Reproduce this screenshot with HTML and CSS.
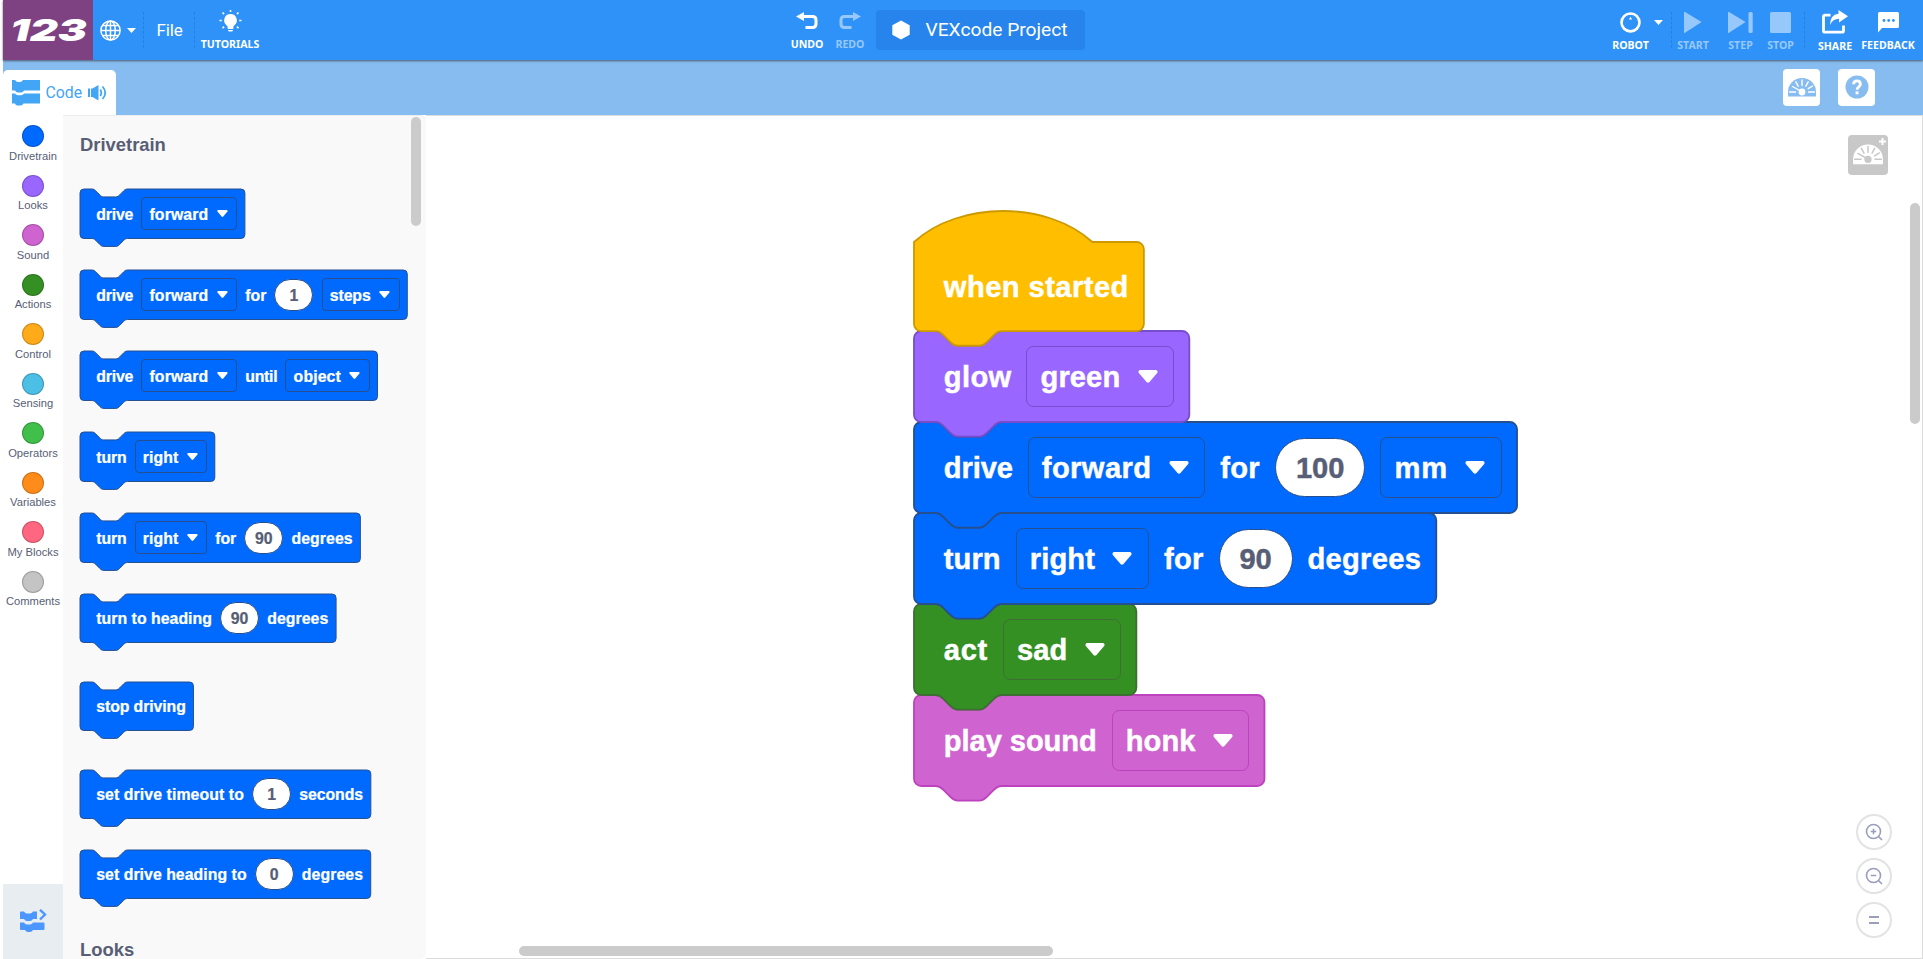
FILE: index.html
```html
<!DOCTYPE html>
<html lang="en">
<head>
<meta charset="utf-8">
<title>VEXcode 123</title>
<link rel="stylesheet" href="styles.css">
</head>
<body>
<svg class="defs" width="0" height="0">
  <symbol id="gauge" viewBox="0 0 30 20">
    <path class="g-body" d="M1 19.5V15a14 14 0 0 1 28 0v4.500z"/>
    <g class="g-mark"><path d="M2.500 15h6M21.500 15h6M15 3v5.500M8.800 4.800l2.400 4.400M21.200 4.800l-2.400 4.400M25.600 9l-4.400 2.700M5.500 9.500l8 4.500"/></g>
    <circle class="g-hub" cx="15" cy="15" r="3.400"/>
  </symbol>
</svg>
<header class="topbar">
  <div class="logo"><svg width="90" height="60"><text x="7" y="41.200" textLength="77" lengthAdjust="spacingAndGlyphs">123</text></svg></div>
  <div class="lang">
    <svg width="21" height="21" viewBox="0 0 21 21"><g fill="none" stroke="#fff" stroke-width="1.500"><circle cx="10.500" cy="10.500" r="9.600"/><ellipse cx="10.500" cy="10.500" rx="4.800" ry="9.600"/><path d="M10.500 1v19M1 10.500h19M2.500 5.600h16M2.500 15.400h16"/></g></svg>
    <svg class="lang-caret" width="9" height="5"><path d="M0 0h9L4.500 5z" fill="#fff"/></svg>
  </div>
  <i class="sep"></i>
  <div class="file">File</div>
  <i class="sep"></i>
  <div class="tool tutorials"><svg width="23" height="23" viewBox="0 0 23 23"><path fill="#fff" d="M11.500 4a6.300 6.300 0 0 0-4 11.200c.9.800 1.200 1.800 1.200 2.800v1h5.600v-1c0-1 .3-2 1.200-2.800A6.300 6.300 0 0 0 11.500 4zM8.800 20h5.400l-1 1.500h-3.400z"/><path stroke="#fff" stroke-width="1.600" d="M11.500 0v2M3.500 2.500l1.600 1.600M19.500 2.500l-1.600 1.600M.5 10.500h2.300M20.200 10.500h2.300M3.500 18.200l1.600-1.600M19.500 18.200l-1.600-1.600"/></svg><span>TUTORIALS</span></div>
  <div class="tool undo"><svg width="22" height="21" viewBox="0 0 22 21"><path fill="#fff" d="M0 4.500L8 0v9z"/><path fill="none" stroke="#fff" stroke-width="3" d="M7 4.500h9.500q3.500 0 3.500 3.500v4q0 3.500-3.500 3.500H9.500"/></svg><span>UNDO</span></div>
  <div class="tool redo dim"><svg width="22" height="21" viewBox="0 0 22 21"><path fill="#fff" d="M22 4.500L14 0v9z"/><path fill="none" stroke="#fff" stroke-width="3" d="M15 4.500H5.500Q2 4.500 2 8v4q0 3.500 3.500 3.500h7"/></svg><span>REDO</span></div>
  <div class="project"><svg width="18" height="20"><path d="M9 .5l8.700 4.800v9.400L9 19.500.300 14.700V5.300z" fill="#fff"/></svg><span>VEXcode Project</span></div>
  <div class="tool robot"><svg width="21" height="21" viewBox="0 0 21 21"><circle cx="10.500" cy="10.500" r="9" fill="none" stroke="#fff" stroke-width="2.600"/><path d="M2 12.500L6 18.500l4.500 2 4.500-2 4-6-3.500 3.700q-5 3.600-10 0z" fill="#fff"/><path d="M10.500 4.800l1.500 2.700H9z" fill="#fff"/></svg><span>ROBOT</span></div>
  <svg class="robot-caret" width="9" height="5"><path d="M0 0h9L4.500 5z" fill="#fff"/></svg>
  <i class="sep sep-run"></i>
  <div class="tool start dim"><svg width="18" height="21"><path d="M0 0.500q0-1 1-.4l16.600 10L1 20.800q-1 .6-1-.4z" fill="#fff"/></svg><span>START</span></div>
  <div class="tool step dim"><svg width="25" height="21"><path d="M0 0.500q0-1 1-.4l16.600 10L1 20.800q-1 .6-1-.4z" fill="#fff"/><rect x="20.500" width="4.200" height="21" rx="1.500" fill="#fff"/></svg><span>STEP</span></div>
  <div class="tool stop dim"><svg width="21" height="21"><rect width="21" height="21" rx="1.500" fill="#fff"/></svg><span>STOP</span></div>
  <i class="sep sep-share"></i>
  <div class="tool share"><svg width="26" height="24" viewBox="0 0 26 24"><path d="M8.500 5.200H3q-1.500 0-1.500 1.500v14Q1.500 22.200 3 22.200h17q1.500 0 1.500-1.500V15.500" fill="none" stroke="#fff" stroke-width="2.800"/><path d="M16.500 0L26 6.200l-9 6.300V8.800Q11 8.700 8 15 8 4.500 16.500 3.700z" fill="#fff"/></svg><span>SHARE</span></div>
  <div class="tool feedback"><svg width="21" height="21" viewBox="0 0 21 21"><path d="M1.500 0h18Q21 0 21 1.500v13q0 1.500-1.500 1.500H4L0 20.500V1.500Q0 0 1.500 0z" fill="#fff"/><g fill="#2f92f8"><circle cx="6" cy="8.500" r="1.400"/><circle cx="10.700" cy="8.500" r="1.400"/><circle cx="15.400" cy="8.500" r="1.400"/></g></svg><span>FEEDBACK</span></div>
</header>
<div class="tabbar">
  <div class="tab">
    <svg width="28" height="26" viewBox="0 0 28 26" fill="#42a5f5"><path d="M0 0h3q1 2 3 2h2q2 0 3-2h17v10.500H12q-1 2-3 2H6q-2 0-3-2H0z"/><path d="M0 13.500h3q1 1.800 3 1.800h3q2 0 3-1.800h16V23.500H11.500q-1 2-3 2h-3q-2 0-2.500-2H0z"/></svg>
    <span>Code</span>
    <svg width="20" height="16" viewBox="0 0 20 16"><path fill="#42a5f5" d="M0 3.500h2v8.500H0zM3 3.500h1.500L10.500 0v15.500L4.500 12H3z"/><path d="M12.300 4.500q2 3.300 0 6.600M14.500 1.500q5.500 6.200 0 12.500" fill="none" stroke="#42a5f5" stroke-width="1.800"/></svg>
  </div>
  <div class="tab-actions">
    <div class="mini monitor"><svg width="30" height="20"><use href="#gauge"/></svg></div>
    <div class="mini"><svg width="24" height="24"><circle cx="12" cy="12" r="11.500" fill="#87bcf1"/><path d="M8.600 9.300Q8.600 5.900 12 5.900t3.400 3.200Q15.400 11 13.500 12.200q-1.400 1-1.400 2.600" fill="none" stroke="#fff" stroke-width="2.800"/><rect x="10.600" y="16.400" width="2.900" height="2.900" fill="#fff"/></svg></div>
  </div>
</div>
<main class="editor">
  <nav class="toolbox">
    <div class="categories" id="categories"></div>
    <div class="toggle"><svg width="27" height="24" viewBox="0 0 27 24" fill="#4c97ff"><path d="M0 3.500q0-1 1-1h3q1 2 3 2h3q2 0 3-2h4V10h-4q-1 2-3 2H7q-2 0-3-2H0z"/><path d="M0 13.500h4q1 2 3 2h3q2 0 3-2h10.500q1 0 1 1v5.500q0 1-1 1H13q-1 2-3 2H8q-2 0-3-2H1q-1 0-1-1z"/><path d="M20 .8l5 4.700-5 5" fill="none" stroke="#4c97ff" stroke-width="2.400"/></svg></div>
  </nav>
  <section class="flyout">
    <h2>Drivetrain</h2>
    <div class="palette" id="palette"></div>
    <h2 class="next">Looks</h2>
    <i class="bar bar-flyout"></i>
  </section>
  <section class="workspace">
    <div class="stack" id="stack"></div>
    <div class="monitor-toggle"><svg width="32" height="22"><use href="#gauge"/></svg><svg class="plus" width="7" height="7"><path d="M3.500 0v7M0 3.500h7" stroke="#fff" stroke-width="2"/></svg></div>
    <div class="zoom">
      <div><svg width="18" height="18"><g fill="none" stroke="#9a9ebb" stroke-width="1.600"><circle cx="8.500" cy="8.500" r="7"/><path d="M13.500 13.500l3.500 3.500M5.700 8.500h5.600M8.500 5.700v5.600"/></g></svg></div>
      <div><svg width="18" height="18"><g fill="none" stroke="#9a9ebb" stroke-width="1.600"><circle cx="8.500" cy="8.500" r="7"/><path d="M13.500 13.500l3.500 3.500M5.700 8.500h5.600"/></g></svg></div>
      <div><svg width="18" height="18"><path d="M4 6h10M4 12h10" stroke="#9a9ebb" stroke-width="2"/></svg></div>
    </div>
    <i class="bar bar-v"></i>
    <i class="bar bar-h"></i>
  </section>
</main>
<script src="blocks.js"></script>
</body>
</html>
```
FILE: styles.css
```css
* { box-sizing: border-box; }
body { margin: 0; height: 959px; overflow: hidden; background: #fff; font-family: "Liberation Sans", Arial, sans-serif; padding-left: 3px; display: flex; flex-direction: column; }
svg { display: block; flex: none; }
.defs { position: absolute; }

.topbar { position: relative; z-index: 2; height: 60px; flex: none; background: #2f92f8; display: flex; align-items: flex-start; color: #fff; box-shadow: 0 1px 2px rgba(60, 60, 60, .75); }
.logo { width: 90px; height: 60px; background: #7e4182; }
.logo text { font: italic 900 30.500px Inter, sans-serif; fill: #fff; }
.lang { display: flex; width: 50px; padding: 20px 0 0 7px; gap: 6px; }
.lang-caret { margin-top: 8px; }
.sep { width: 0; height: 36px; margin-top: 12px; border-left: 1px dashed #1f7ee0; opacity: .8; }
.file { width: 50px; font: 17px/60px Roboto, sans-serif; letter-spacing: -.1px; padding-left: 12.500px; height: 60px; }
.tool { display: flex; flex-direction: column; align-items: center; height: 60px; padding-top: 12px; flex: none; }
.tool span { font: bold 10.600px/14px "Noto Sans", sans-serif; margin-top: auto; margin-bottom: 8px; white-space: nowrap; }
.dim { color: #97c8fb; }
.dim svg { opacity: .5; }
.tutorials { width: 58px; margin-left: 6px; padding-top: 10px; }
.tutorials span, .undo span, .redo span { margin-bottom: 9.500px; }
.undo { width: 32px; margin-left: 532px; }
.redo { width: 30px; margin-left: 12px; }
.project { width: 209px; height: 40px; margin: 10px 0 0 11px; border-radius: 4px; background: #2684ec; display: flex; align-items: center; padding-left: 15.500px; gap: 16px; font: 19.200px/40px Roboto, sans-serif; white-space: nowrap; }
.robot { width: 37px; margin-left: 527px; }
.robot-caret { margin: 20px 0 0 5px; }
.sep-run { margin-left: 8px; }
.start { width: 32px; margin-left: 5px; }
.step { width: 25px; margin-left: 19px; }
.stop { width: 27px; margin-left: 14px; }
.sep-share { margin-left: 10px; }
.share { width: 34px; margin-left: 13px; padding-top: 10px; }
.share span { margin-bottom: 7.500px; }
.feedback { width: 53px; margin-left: 9.500px; }

.tabbar { height: 55px; flex: none; background: #87bcf1; display: flex; justify-content: space-between; align-items: flex-end; }
.tab { width: 113px; height: 45px; background: #fff; border-radius: 5px 5px 0 0; display: flex; align-items: center; padding-left: 9px; gap: 5.500px; color: #42a5f5; font: 15.800px Roboto, sans-serif; }
.tab-actions { display: flex; gap: 18px; padding: 0 48px 9px 0; }
.mini { width: 37px; height: 37px; border-radius: 4px; background: #fff; display: flex; align-items: center; justify-content: center; padding-bottom: 1px; }
.g-body { fill: var(--body, #fff); }
.g-hub { fill: var(--mark, #c8c8c8); }
.g-mark { stroke: var(--mark, #c8c8c8); stroke-width: 1.400px; stroke-linecap: round; }
.monitor { --body: #87bcf1; --mark: #fff; }

.editor { flex: 1; display: flex; min-height: 0; }
.toolbox { width: 60px; display: flex; flex-direction: column; justify-content: space-between; }
.categories { padding-top: 10px; }
.category { height: 49.500px; display: flex; flex-direction: column; align-items: center; color: #575e75; font-size: 11.200px; line-height: 13px; white-space: nowrap; }
.category i { width: 22px; height: 22px; border-radius: 50%; border: 1px solid rgba(0, 0, 0, .2); margin-bottom: 2.500px; flex: none; }
.toggle { height: 75px; background: #e8edf1; padding: 25px 0 0 17px; }
.flyout { position: relative; width: 363px; background: #f9f9f9; border-top: 1px solid #ededed; padding: 19px 0 0 17px; overflow: hidden; border-radius: 0 6px 6px 0; }
.flyout h2 { margin: 0; font-size: 18.400px; line-height: 20px; color: #575e75; height: 54px; }
.flyout .next { margin-top: 41px; }
.workspace { position: relative; flex: 1; border: solid #dcdcdc; border-width: 1px 1px 1px 0; overflow: hidden; }
.bar { position: absolute; border-radius: 5px; background: #cbcbcb; }
.bar-flyout { left: 348px; top: 1px; width: 10px; height: 109px; }
.bar-v { right: 2px; top: 87px; width: 10px; height: 221px; }
.bar-h { left: 93px; bottom: 2px; width: 534px; height: 10px; }

/* Blocks: --u is the size of one block unit */
.palette { --u: .99px; --num: 39.4; --caret-gap: 8.6; --end: 7.8; }
.stack { --u: 1.82px; --num: 40.6; --caret-gap: 9.5; --end: 8.3; padding: 95px 0 0 488px; }
.block { position: relative; display: flex; align-items: center; width: max-content; gap: calc(8.2 * var(--u)); padding: 0 calc(var(--end) * var(--u)) 0 calc(16.4 * var(--u)); height: calc(49 * var(--u)); color: #fff; font-weight: bold; font-size: calc(16 * var(--u)); line-height: 1; white-space: nowrap; -webkit-text-stroke: calc(.25 * var(--u)) currentColor; }
.block > * { flex: none; }
.block.tall { height: calc(50 * var(--u)); }
.block.hat { height: calc(49 * var(--u)); margin-top: calc(17 * var(--u)); }
.palette .block { margin-bottom: 31.500px; }
.palette .wide-gap { margin-bottom: 39.500px; }
.shape { position: absolute; left: 0; top: 0; width: 1px; height: 1px; overflow: visible; }
.label, .menu, .number { position: relative; }
.label { padding-top: calc(1.500 * var(--u)); }
.menu { display: flex; align-items: center; gap: calc(var(--caret-gap) * var(--u)); height: calc(33.800 * var(--u)); padding: 0 calc(8.6 * var(--u)) 0 calc(7.2 * var(--u)); border: calc(.9 * var(--u)) solid var(--edge); border-radius: calc(4 * var(--u)); }
.menu svg { width: calc(11 * var(--u)); height: calc(7.200 * var(--u)); }
.number { width: calc(var(--num) * var(--u)); height: calc(32.800 * var(--u)); border-radius: calc(16.400 * var(--u)); background: #fff; color: #575e75; border: calc(.7 * var(--u)) solid var(--edge); display: flex; align-items: center; justify-content: center; padding-top: calc(1.500 * var(--u)); }
.number.long { width: calc(49.800 * var(--u)); }

.monitor-toggle { position: absolute; right: 34px; top: 19px; width: 40px; height: 40px; border-radius: 4px; background: #c8c8c8; padding: 8px 4px; }
.plus { position: absolute; right: 2px; top: 3px; }
.zoom { position: absolute; right: 30px; top: 698px; display: flex; flex-direction: column; gap: 8px; }
.zoom div { width: 36px; height: 36px; border: 2px solid #e3e3e3; border-radius: 50%; display: flex; align-items: center; justify-content: center; background: #fff; }
```
FILE: blocks.js
```js
const CATEGORIES = [
  ["Drivetrain", "#006aff"], ["Looks", "#9966ff"], ["Sound", "#cf63cf"], ["Actions", "#359023"],
  ["Control", "#ffab19"], ["Sensing", "#4cbfe6"], ["Operators", "#40bf4a"], ["Variables", "#ff8c1a"],
  ["My Blocks", "#ff6680"], ["Comments", "#c4c4c4"],
];
const BLUE = ["#006aff", "#264f8f"];

// Parts: a string is a label, {menu} a dropdown, {num} a number input.
const drive = ["drive", { menu: "forward" }];
const turn = ["turn", { menu: "right" }];
const PALETTE = [
  { parts: drive },
  { parts: [...drive, "for", { num: 1 }, { menu: "steps" }] },
  { parts: [...drive, "until", { menu: "object" }] },
  { parts: turn },
  { parts: [...turn, "for", { num: 90 }, "degrees"] },
  { parts: ["turn to heading", { num: 90 }, "degrees"], wide: true },
  { parts: ["stop driving"], wide: true },
  { parts: ["set drive timeout to", { num: 1 }, "seconds"] },
  { parts: ["set drive heading to", { num: 0 }, "degrees"] },
];
const STACK = [
  { parts: ["when started"], hat: true, color: ["#ffbf00", "#cc9900"] },
  { parts: ["glow", { menu: "green" }], color: ["#9966ff", "#774dcb"] },
  { parts: [...drive, "for", { num: 100 }, { menu: "mm" }] },
  { parts: [...turn, "for", { num: 90 }, "degrees"] },
  { parts: ["act", { menu: "sad" }], color: ["#359023", "#3f6e35"] },
  { parts: ["play sound", { menu: "honk" }], color: ["#cf63cf", "#bd42bd"] },
];

// Label widths in block units; large-scale text runs slightly wider for some words.
const WIDTHS = {
  "drive": 37.4, "forward": 59.4, "for": 21.3, "steps": 41.4, "until": 32.4, "object": 47.8,
  "turn": 30.7, "right": 35.7, "degrees": 61.8, "turn to heading": 116.9, "stop driving": 90.4,
  "set drive timeout to": 149.2, "seconds": 64.6, "set drive heading to": 151.9,
  "when started": 101.6, "glow": 37.2, "green": 43.8, "act": 24.2, "sad": 27.7,
  "play sound": 84.0, "honk": 38.3, "mm": 29.4,
};
const LARGE_WIDTHS = { "drive": 37.9, "forward": 60.2, "for": 21.8, "turn": 31.2, "right": 36, "degrees": 62.5 };

function el(tag, cls, parent) {
  const e = document.createElement(tag);
  e.className = cls;
  parent.appendChild(e);
  return e;
}

function addLabel(text, parent, unit) {
  const e = el("span", "label", parent);
  e.textContent = text;
  const width = (unit > 1 && LARGE_WIDTHS[text]) || WIDTHS[text];
  const diff = width * unit - e.getBoundingClientRect().width;
  e.style.letterSpacing = diff / text.length + "px";
}

function outline(w, h, hat) {
  const top = hat
    ? "M0 0c25-22.7 73-22.7 98 0"
    : "M0 4A4 4 0 0 1 4 0H12c2 0 3 1 4 2l4 4c1 1 2 2 4 2h12c2 0 3-1 4-2l4-4c1-1 2-2 4-2";
  return `${top}H${w - 4}a4 4 0 0 1 4 4V${h - 4}a4 4 0 0 1-4 4H48c-2 0-3 1-4 2l-4 4c-1 1-2 2-4 2H24` +
    `c-2 0-3-1-4-2l-4-4c-1-1-2-2-4-2H4a4 4 0 0 1-4-4z`;
}

function render(list, host, unit) {
  list.forEach((spec) => {
    const [fill, edge] = spec.color || BLUE;
    const tall = spec.parts.some((p) => p.menu);
    const block = el("div", "block" + (tall ? " tall" : "") + (spec.hat ? " hat" : "") + (spec.wide ? " wide-gap" : ""), host);
    block.style.setProperty("--edge", edge);
    block.style.zIndex = list.length - list.indexOf(spec);
    spec.parts.forEach((p) => {
      if (p.menu) {
        const m = el("span", "menu", block);
        addLabel(p.menu, m, unit);
        m.insertAdjacentHTML("beforeend", '<svg viewBox="0 0 11.300 7.500"><path d="M1 0h9.300q1.300.6.6 1.700L6.500 6.900q-.9.900-1.700 0L.4 1.700Q-.3.600 1 0z" fill="#fff"/></svg>');
      } else if (p.num !== undefined) {
        el("span", "number" + (p.num > 99 ? " long" : ""), block).textContent = p.num;
      } else {
        addLabel(p, block, unit);
      }
    });
    const box = block.getBoundingClientRect();
    const path = outline(box.width / unit, box.height / unit, spec.hat);
    block.insertAdjacentHTML("afterbegin",
      `<svg class="shape"><path transform="scale(${unit})" d="${path}" fill="${fill}" stroke="${edge}" stroke-width="1"/></svg>`);
  });
}

CATEGORIES.forEach(([name, color]) => {
  const c = el("div", "category", document.getElementById("categories"));
  el("i", "", c).style.background = color;
  c.append(name);
});
render(PALETTE, document.getElementById("palette"), 0.99);
render(STACK, document.getElementById("stack"), 1.82);
```
